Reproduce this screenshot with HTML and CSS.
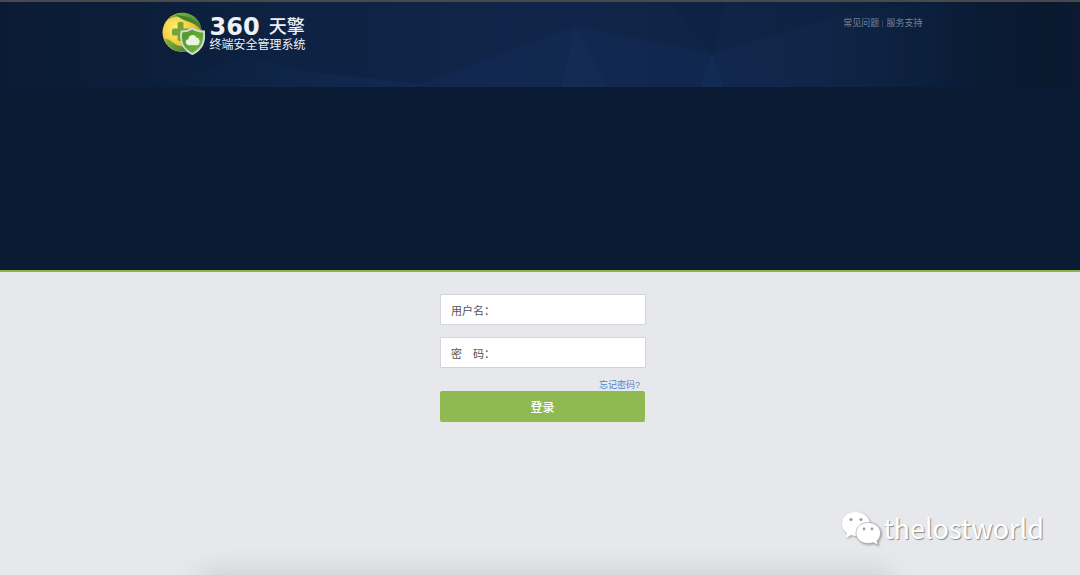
FILE: index.html
```html
<!DOCTYPE html>
<html lang="zh-CN">
<head>
<meta charset="utf-8">
<meta name="viewport" content="width=device-width, initial-scale=1">
<title>360天擎终端安全管理系统</title>
<link rel="stylesheet" href="styles.css">
</head>
<body>
<header class="hero">
  <div class="banner">
    <svg class="facets" viewBox="0 0 1080 85" preserveAspectRatio="none" aria-hidden="true">
      <defs>
        <linearGradient id="base" x1="0" x2="1">
          <stop offset="0" stop-color="#0b1b35"/>
          <stop offset=".13" stop-color="#0b1e3a"/>
          <stop offset=".28" stop-color="#0e2343"/>
          <stop offset=".5" stop-color="#102549"/>
          <stop offset=".75" stop-color="#0e2344"/>
          <stop offset=".88" stop-color="#0a1d38"/>
          <stop offset=".97" stop-color="#0a182e"/>
          <stop offset="1" stop-color="#0a1a31"/>
        </linearGradient>
        <linearGradient id="low" x1="0" x2="1">
          <stop offset="0" stop-color="#122c56" stop-opacity="0"/>
          <stop offset=".4" stop-color="#122c56" stop-opacity=".2"/>
          <stop offset="1" stop-color="#122c56" stop-opacity=".7"/>
        </linearGradient>
        <linearGradient id="right" x1="0" x2="1">
          <stop offset="0" stop-color="#14294f" stop-opacity=".6"/>
          <stop offset="1" stop-color="#14294f" stop-opacity="0"/>
        </linearGradient>
      </defs>
      <rect width="1080" height="85" fill="url(#base)"/>
      <path d="M150 85 250 54 300 69 420 82 412 85z" fill="url(#low)"/>
      <path d="M412 85 575 24 712 52 790 85z" fill="#122a52" opacity=".7"/>
      <path d="M561 85 575 24 609 85z" fill="#152e57" opacity=".6"/>
      <path d="M712 52 860 8 960 0 960 85H790z" fill="url(#right)"/>
      <path d="M700 85 712 52 724 85z" fill="#122d59" opacity=".7"/>
      <path d="M668 0H725L712 52z" fill="#0d2142" opacity=".4"/>
    </svg>
    <div class="bar">
      <a class="brand" href="#">
        <svg class="emblem" viewBox="0 0 44 44" aria-hidden="true">
          <defs>
            <radialGradient id="gold" cx=".35" cy=".4" r=".65">
              <stop offset="0" stop-color="#fff08a"/>
              <stop offset=".45" stop-color="#f8d544"/>
              <stop offset="1" stop-color="#dda526"/>
            </radialGradient>
            <linearGradient id="leaf" x1="0" y1="0" x2="1" y2="1">
              <stop offset="0" stop-color="#86b842"/>
              <stop offset="1" stop-color="#3a7a2b"/>
            </linearGradient>
            <linearGradient id="shield" x1="0" y1="0" x2="1" y2="1">
              <stop offset="0" stop-color="#4a932f"/>
              <stop offset=".5" stop-color="#61a733"/>
              <stop offset="1" stop-color="#7cc03a"/>
            </linearGradient>
          </defs>
          <circle cx="20.500" cy="21" r="20" fill="url(#gold)"/>
          <path d="M6 8C11 2 18 0 24 1 35 3 41 12 40 19 37 14 33 13 29 10 22 4 14 3 6 8z" fill="url(#leaf)"/>
          <path d="M14 3C22 4 31 4 37 13 30 11 22 9 14 3z" fill="#3f8230"/>
          <path d="M2 28C9 26 11 35 21 35 26 35 31 36 33 37 23 44 8 41 2 28z" fill="url(#leaf)"/>
          <path d="M16 11Q19 9 22 11V17H28V24H22V29Q19 31 16 29V24H11Q9 21 11 17H16z" fill="#74a535"/>
          <path d="M31 17Q36 20 43 20C44 31 41 38 31 43 21 38 18 31 20 20Q26 20 31 17z" fill="url(#shield)" stroke="#cfdad3" stroke-width="2"/>
          <path d="M27 34C23 33 24 28 27 28 27 23 34 22 35 26 39 26 40 33 36 34z" fill="#e9f4dc"/>
        </svg>
        <span class="names">
          <span class="product"><b class="num">360</b><span class="cn">天擎</span></span>
          <span class="subtitle">终端安全管理系统</span>
        </span>
      </a>
      <nav class="links">
        <a href="#">常见问题</a><span class="divider"></span><a href="#">服务支持</a>
      </nav>
    </div>
  </div>
</header>
<main class="content">
  <form class="login">
    <div class="field">
      <label for="user">用户名：</label>
      <input id="user" type="text">
    </div>
    <div class="field">
      <label for="pass">密　码：</label>
      <input id="pass" type="password">
    </div>
    <a class="forgot" href="#">忘记密码?</a>
    <button class="submit" type="submit">登录</button>
  </form>
  <div class="shade"></div>
  <div class="watermark">
    <svg class="wechat" viewBox="0 0 40 35" aria-hidden="true">
      <path d="M14.500 1C6.500 1 1 6 1 13 1 17 3 20 6 22L5 27 10 24Q12 25 16 25C23 25 29 20 29 13 29 6 22 1 14.500 1z"/>
      <path d="M27 11.500C20 11.500 15 16 15 22 15 28 20 32.500 27 32.500Q30 32.500 32 31.500L37 34 36 30C38 28 39.500 25 39.500 22 39.500 16 34 11.500 27 11.500z" stroke="#a4a6a9" stroke-width=".7"/>
      <g class="eyes"><circle cx="10" cy="8.500" r="1.600"/><circle cx="20" cy="8.500" r="1.600"/><circle cx="23" cy="18" r="1.400"/><circle cx="31" cy="18" r="1.400"/></g>
    </svg>
    <span>thelostworld</span>
  </div>
</main>
</body>
</html>
```
FILE: styles.css
```css
* { box-sizing: border-box; }

body {
  margin: 0;
  min-height: 100vh;
  display: flex;
  flex-direction: column;
  background: #e6e8ec;
  font-family: "Liberation Sans", "Noto Sans CJK SC", sans-serif;
}

a { text-decoration: none; }

.hero {
  height: 272px;
  background: #0a1b33;
  border-top: 2px solid #48494b;
  border-bottom: 2px solid #8ab649;
}

.banner {
  position: relative;
  height: 85px;
}

.facets {
  position: absolute;
  inset: 0;
  width: 100%;
  height: 100%;
}

.bar {
  position: relative;
  width: 71%;
  margin: 0 auto;
  padding-top: 10px;
  display: flex;
  justify-content: space-between;
  align-items: flex-start;
}

.brand {
  display: flex;
  gap: 5px;
  padding-left: 5px;
  color: #eef1f6;
}

.emblem {
  width: 43px;
  height: 43px;
}

.names {
  display: flex;
  flex-direction: column;
  padding-top: 4px;
}

.product {
  display: flex;
  align-items: center;
  gap: 9px;
  height: 22px;
}

.num {
  font-family: "DejaVu Sans", sans-serif;
  font-size: 24px;
  line-height: 22px;
}

.cn {
  font-size: 18px;
  line-height: 22px;
  font-weight: 500;
}

.subtitle {
  font-size: 12px;
  line-height: 15px;
}

.links {
  display: flex;
  align-items: center;
  gap: 3px;
  padding-right: 1px;
  padding-top: 4px;
  font-size: 9px;
  line-height: 15px;
}

.links a { color: #77839a; }

.divider {
  width: 1px;
  height: 7px;
  background: #33425c;
}

.content {
  position: relative;
  flex: 1;
  padding-top: 22px;
  overflow: hidden;
}

.login {
  width: 206px;
  margin-left: calc(50% - 100px);
  display: flex;
  flex-direction: column;
}

.field {
  display: flex;
  align-items: center;
  height: 31px;
  margin-bottom: 12px;
  padding: 0 10px;
  background: #fff;
  border: 1px solid #d2d4d7;
  border-radius: 1px;
}

.field label {
  font-size: 11px;
  color: #555;
  white-space: nowrap;
}

.field input {
  flex: 1;
  min-width: 0;
  border: 0;
  outline: 0;
  background: transparent;
  font-size: 11px;
}

.forgot {
  align-self: flex-end;
  margin-right: 6px;
  font-size: 9px;
  line-height: 11px;
  color: #4f86cf;
}

.submit {
  height: 31px;
  margin-right: 1px;
  padding: 0;
  border: 0;
  border-radius: 2px;
  background: #8fba51;
  color: #fff;
  font: 500 12px "Liberation Sans", "Noto Sans CJK SC", sans-serif;
}

.shade {
  position: absolute;
  left: 19%;
  right: 18%;
  bottom: -24px;
  height: 20px;
  box-shadow: 0 0 30px 4px rgba(0, 0, 0, 0.15);
}

.watermark {
  position: absolute;
  right: 36px;
  bottom: 29px;
  display: flex;
  align-items: center;
  gap: 2px;
  color: #fff;
  font-family: "Noto Sans CJK SC", sans-serif;
  font-size: 27px;
  line-height: 36px;
  text-shadow: 1px 1px 1px #888;
}

.wechat {
  width: 40px;
  height: 35px;
  fill: #fff;
  filter: drop-shadow(1px 1px 1px #999);
}

.eyes { fill: #9b9da0; }
```
